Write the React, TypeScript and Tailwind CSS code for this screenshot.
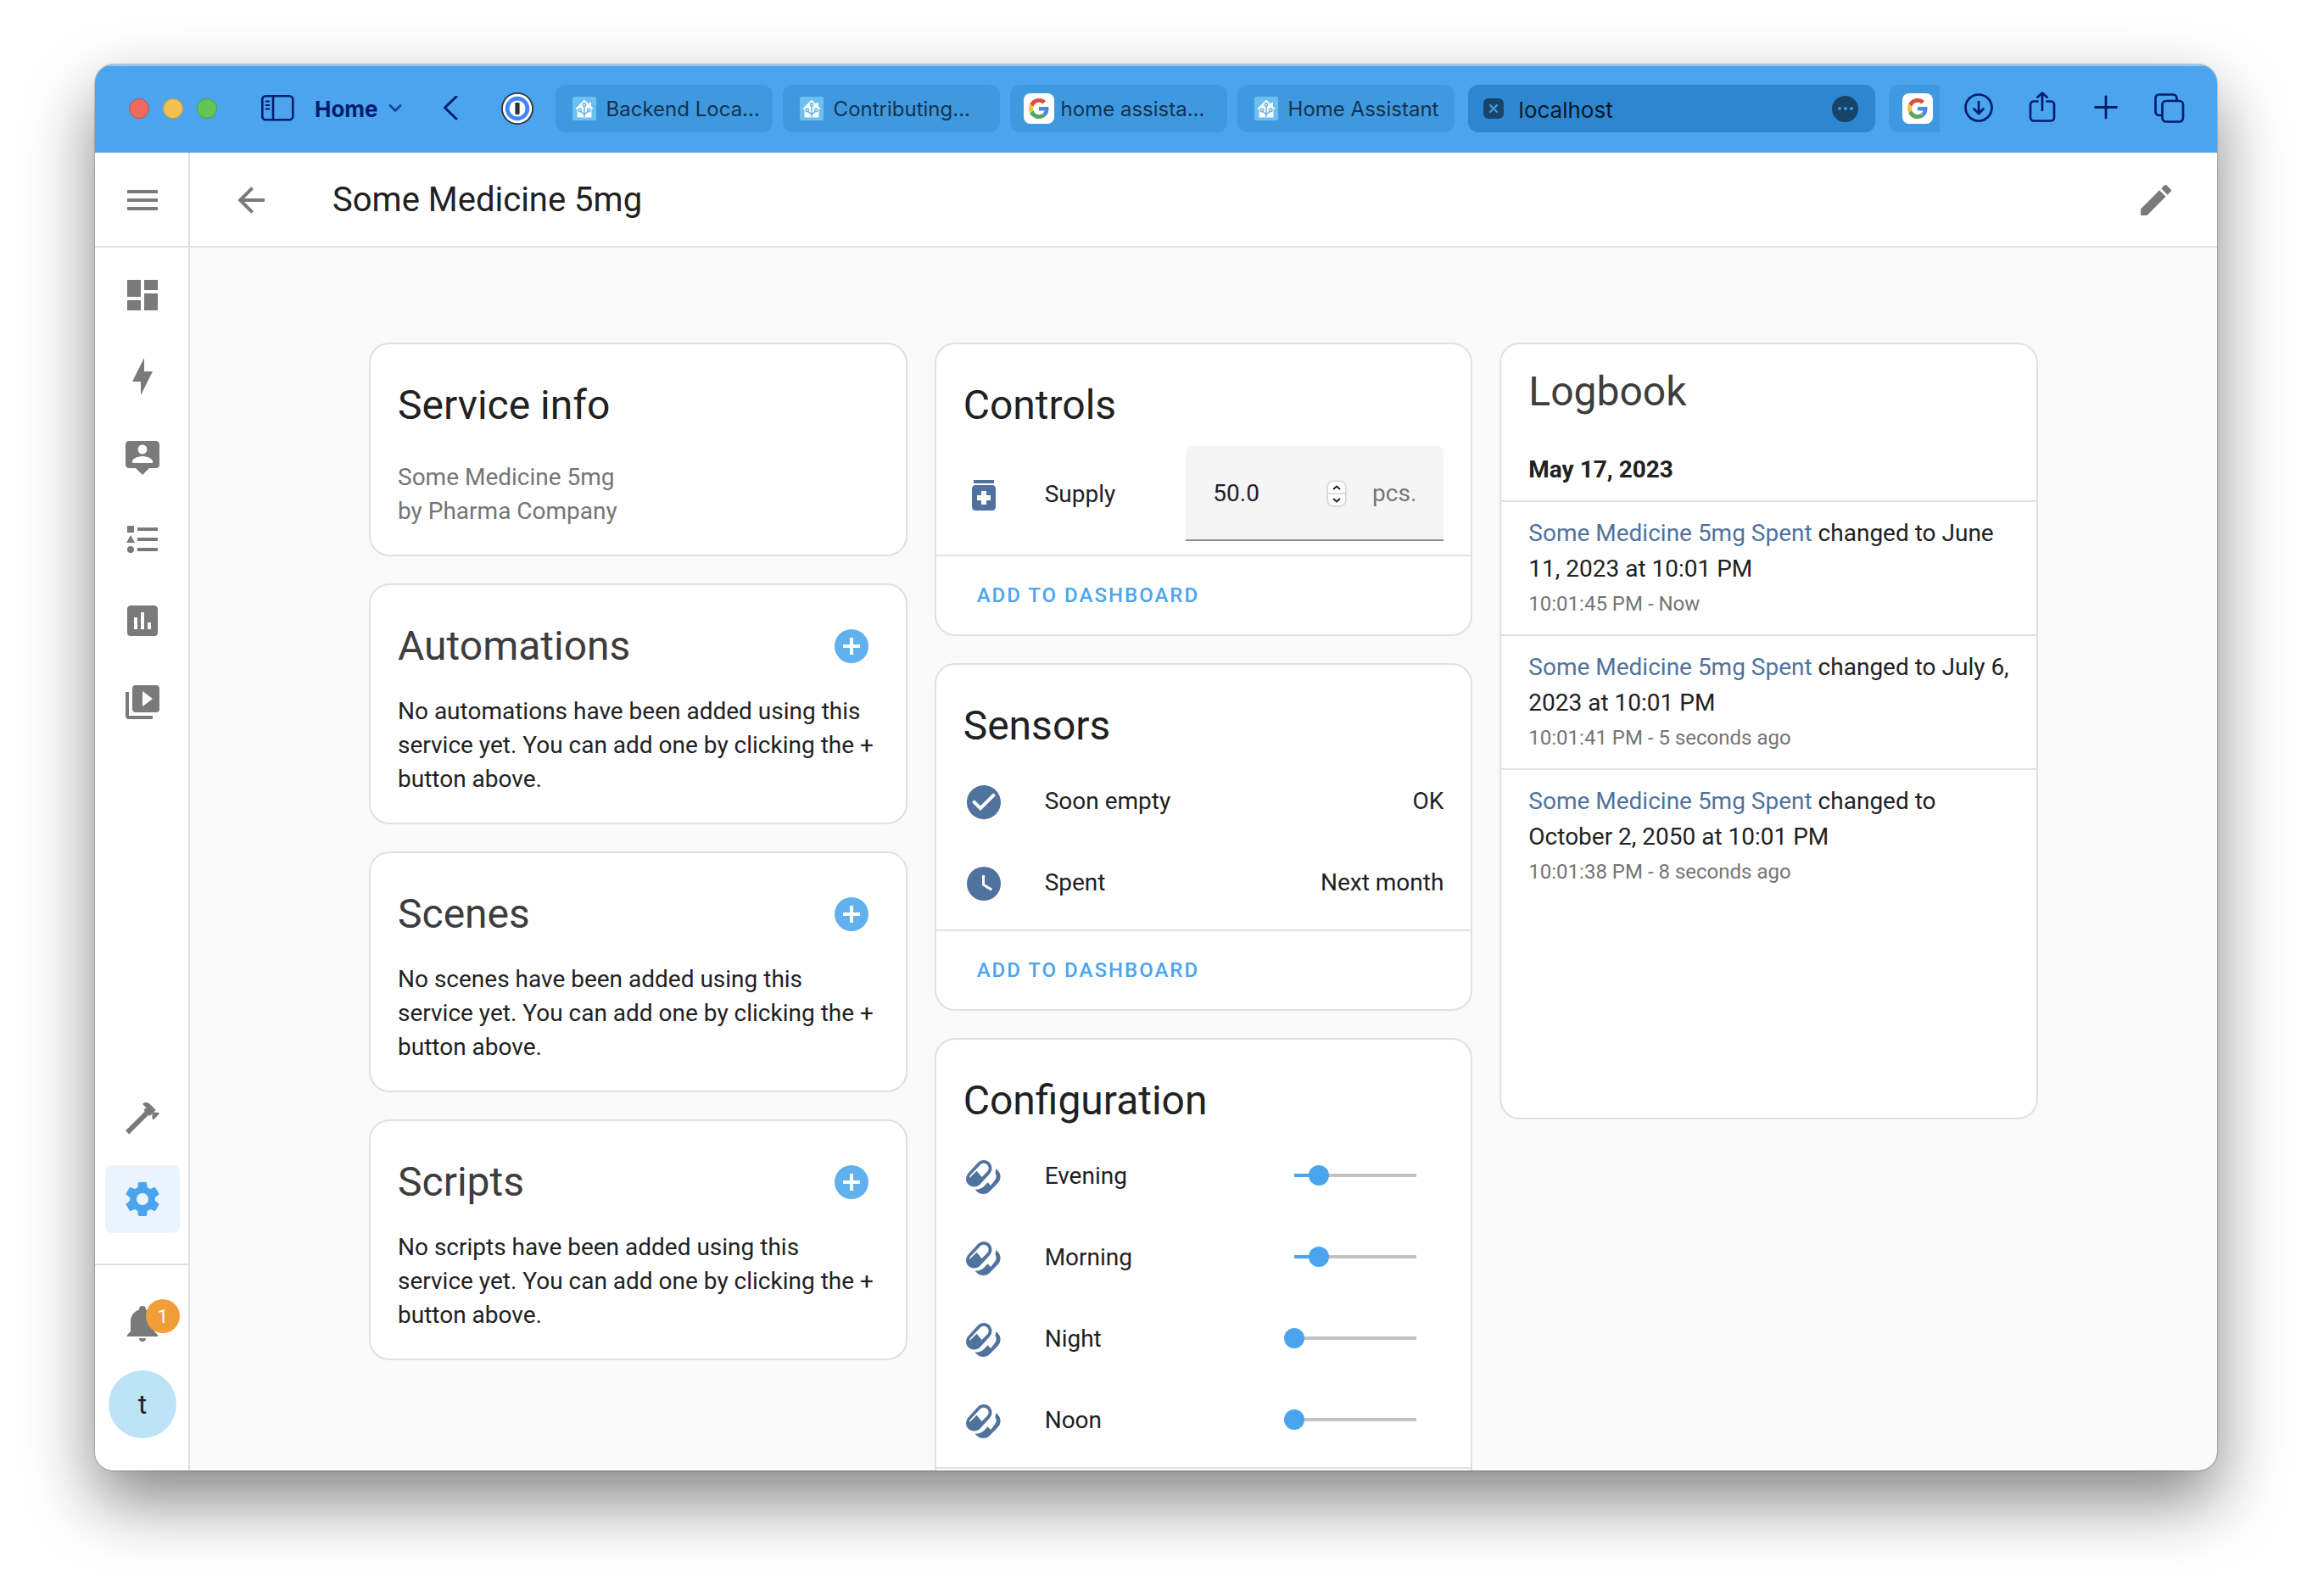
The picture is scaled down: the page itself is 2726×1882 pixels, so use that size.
import React from "react";

const MENU = "M3,6H21V8H3V6M3,11H21V13H3V11M3,16H21V18H3V16Z";
const ARROW_LEFT =
  "M20,11V13H8L13.5,18.5L12.08,19.92L4.16,12L12.08,4.08L13.5,5.5L8,11H20Z";
const PENCIL =
  "M20.71,7.04C21.1,6.65 21.1,6 20.71,5.63L18.37,3.29C18,2.9 17.35,2.9 16.96,3.29L15.12,5.12L18.87,8.87M3,17.25V21H6.75L17.81,9.93L14.06,6.18L3,17.25Z";
const DASHBOARD = "M13,3V9H21V3M13,21H21V11H13M3,21H11V15H3M3,13H11V3H3V13Z";
const LIGHTNING = "M11 15H6L13 1V9H18L11 23V15Z";
const TOOLTIP_ACCOUNT =
  "M20 2H4C2.89 2 2 2.89 2 4V16C2 17.11 2.9 18 4 18H8L12 22L16 18H20C21.11 18 22 17.11 22 16V4C22 2.89 21.11 2 20 2M12 4.3C13.5 4.3 14.7 5.5 14.7 7S13.5 9.7 12 9.7 9.3 8.5 9.3 7 10.5 4.3 12 4.3M18 15H6V14.1C6 12.1 10 11 12 11S18 12.1 18 14.1V15Z";
const LIST_TYPE =
  "M5,9.5L7.5,14H2.5L5,9.5M3,4H7V8H3V4M5,20A2,2 0 0,0 7,18A2,2 0 0,0 5,16A2,2 0 0,0 3,18A2,2 0 0,0 5,20M9,5V7H21V5H9M9,19H21V17H9V19M9,13H21V11H9V13Z";
const CHART_BOX =
  "M9 17H7V10H9V17M13 17H11V7H13V17M17 17H15V13H17V17M19 3H5C3.89 3 3 3.9 3 5V19A2 2 0 0 0 5 21H19A2 2 0 0 0 21 19V5C21 3.9 20.1 3 19 3Z";
const PLAY_BOXES =
  "M4,6H2V20A2,2 0 0,0 4,22H18V20H4V6M20,2H8A2,2 0 0,0 6,4V16A2,2 0 0,0 8,18H20A2,2 0 0,0 22,16V4A2,2 0 0,0 20,2M12,14.5V5.5L18,10L12,14.5Z";
const HAMMER =
  "M2,19.63L13.43,8.2L12.72,7.5L14.14,6.07L12,3.89C13.2,2.7 15.09,2.7 16.27,3.89L19.87,7.5L18.45,8.91H21.29L22,9.62L18.45,13.21L17.74,12.5V9.62L16.27,11.04L15.56,10.33L4.13,21.76L2,19.63Z";
const COG =
  "M12,15.5A3.5,3.5 0 0,1 8.5,12A3.5,3.5 0 0,1 12,8.5A3.5,3.5 0 0,1 15.5,12A3.5,3.5 0 0,1 12,15.5M19.43,12.97C19.47,12.65 19.5,12.33 19.5,12C19.5,11.67 19.47,11.34 19.43,11L21.54,9.37C21.73,9.22 21.78,8.95 21.66,8.73L19.66,5.27C19.54,5.05 19.27,4.96 19.05,5.05L16.56,6.05C16.04,5.66 15.5,5.32 14.87,5.07L14.5,2.42C14.46,2.18 14.25,2 14,2H10C9.75,2 9.54,2.18 9.5,2.42L9.13,5.07C8.5,5.32 7.96,5.66 7.44,6.05L4.95,5.05C4.73,4.96 4.46,5.05 4.34,5.27L2.34,8.73C2.21,8.95 2.27,9.22 2.46,9.37L4.57,11C4.53,11.34 4.5,11.67 4.5,12C4.5,12.33 4.53,12.65 4.57,12.97L2.46,14.63C2.27,14.78 2.21,15.05 2.34,15.27L4.34,18.73C4.46,18.95 4.73,19.03 4.95,18.95L7.44,17.94C7.96,18.34 8.5,18.68 9.13,18.93L9.5,21.58C9.54,21.82 9.75,22 10,22H14C14.25,22 14.46,21.82 14.5,21.58L14.87,18.93C15.5,18.67 16.04,18.34 16.56,17.94L19.05,18.95C19.27,19.03 19.54,18.95 19.66,18.73L21.66,15.27C21.78,15.05 21.73,14.78 21.54,14.63L19.43,12.97Z";
const BELL =
  "M21,19V20H3V19L5,17V11C5,7.9 7.03,5.17 10,4.29C10,4.19 10,4.1 10,4A2,2 0 0,1 12,2A2,2 0 0,1 14,4C14,4.1 14,4.19 14,4.29C16.97,5.17 19,7.9 19,11V17L21,19M14,21A2,2 0 0,1 12,23A2,2 0 0,1 10,21";
const PLUS_CIRCLE =
  "M17,13H13V17H11V13H7V11H11V7H13V11H17M12,2A10,10 0 0,0 2,12A10,10 0 0,0 12,22A10,10 0 0,0 22,12A10,10 0 0,0 12,2Z";
const CHECK_CIRCLE =
  "M12 2C6.5 2 2 6.5 2 12S6.5 22 12 22 22 17.5 22 12 17.5 2 12 2M10 17L5 12L6.41 10.59L10 14.17L17.59 6.58L19 8L10 17Z";
const CLOCK =
  "M12,2A10,10 0 0,0 2,12A10,10 0 0,0 12,22A10,10 0 0,0 22,12A10,10 0 0,0 12,2M16.2,16.2L11,13V7H12.5V12.2L17,14.9L16.2,16.2Z";
const MEDICATION =
  "M6,3H18V5H6V3M17,6H7C5.9,6 5,6.9 5,8V19C5,20.1 5.9,21 7,21H17C18.1,21 19,20.1 19,19V8C19,6.9 18.1,6 17,6M16,15H13.5V17.5H10.5V15H8V12H10.5V9.5H13.5V12H16V15Z";
const PILLS =
  "M8.6 3.4C10.5 1.6 13.5 1.6 15.3 3.4C17.2 5.3 17.2 8.3 15.3 10.2L9.7 16.4C7.8 18.2 4.8 18.2 2.9 16.4C1.1 14.5 1.1 11.5 2.9 9.6ZM10 4.6L4.2 10.7C3.7 11.2 3.5 11.9 3.5 12.6L7.8 8.4L10.8 12L14 8.7C15.1 7.6 15.1 5.8 14 4.7C12.9 3.6 11.1 3.5 10 4.6ZM19 7.1C21.3 8.3 22.6 11.4 21.3 14C20.9 14.9 20.3 15.5 19.6 16.2L15.4 20.5C14 22 11.6 22.4 9.6 21.6C8.3 21.1 7.4 20.2 6.8 19.3C8.6 19.4 10.4 18.9 11.9 17.6L14.3 15.1L16 17L18.2 14.2C19.6 12.7 19.6 11 18.7 9.5C18.9 8.7 19.1 7.9 19 7.1Z";

function Icon({ path }: { path: string }) {
  return (
    <svg viewBox="0 0 24 24" className="size-12 shrink-0" fill="currentColor" aria-hidden="true">
      <path fillRule="evenodd" d={path} />
    </svg>
  );
}

function HomeAssistantLogo() {
  return (
    <svg viewBox="0 0 28 28" className="size-7 shrink-0" aria-hidden="true">
      <rect width="28" height="28" rx="2" fill="#6cc0f0" />
      <path d="M14 3.5L3 14.5H5.5V24.5H22.5V14.5H25L22 11.5V7H19.5V9Z" fill="#f7f9fb" />
      <g fill="none" stroke="#5db4e8" strokeWidth="1.4">
        <path d="M14 24V11M14 21L9.5 17.2M14 21L18.5 17.2" />
        <circle cx="14" cy="9.5" r="1.7" />
        <circle cx="8.8" cy="16" r="1.7" />
        <circle cx="19.2" cy="16" r="1.7" />
      </g>
    </svg>
  );
}

function GoogleLogo() {
  return (
    <span className="flex size-9 shrink-0 items-center justify-center rounded-lg bg-white">
      <svg viewBox="0 0 48 48" className="size-6" aria-hidden="true">
        <path fill="#d94f3d" d="M24 9.5c3.54 0 6.71 1.22 9.21 3.6l6.85-6.85C35.9 2.38 30.47 0 24 0 14.62 0 6.51 5.38 2.56 13.22l7.98 6.19C12.43 13.72 17.74 9.5 24 9.5z" />
        <path fill="#5086ec" d="M46.98 24.55c0-1.57-.15-3.09-.38-4.55H24v9.02h12.94c-.58 2.96-2.26 5.48-4.78 7.18l7.73 6c4.51-4.18 7.09-10.36 7.09-17.65z" />
        <path fill="#f2be42" d="M10.53 28.59c-.48-1.45-.76-2.99-.76-4.59s.27-3.14.76-4.59l-7.98-6.19C.92 16.46 0 20.12 0 24c0 3.88.92 7.54 2.56 10.78l7.97-6.19z" />
        <path fill="#58a55c" d="M24 48c6.48 0 11.93-2.13 15.89-5.81l-7.73-6c-2.15 1.45-4.92 2.3-8.16 2.3-6.26 0-11.57-4.22-13.47-9.91l-7.98 6.19C6.51 42.62 14.62 48 24 48z" />
      </svg>
    </span>
  );
}

function BrowserTab({ title, google = false }: { title: string; google?: boolean }) {
  return (
    <button
      className={`flex h-14 w-64 shrink-0 items-center rounded-xl bg-[#3f99e1] text-2xl text-[#15324c] ${
        google ? "gap-2 pl-4" : "gap-3 pl-5"
      }`}
    >
      {google ? <GoogleLogo /> : <HomeAssistantLogo />}
      <span className="pt-[2px] whitespace-nowrap">{title}</span>
    </button>
  );
}

function BrowserBar() {
  return (
    <div className="flex h-[104px] shrink-0 items-center bg-[#4ba5ee] pl-10 pr-[38px] font-[Inter,sans-serif] text-[#021c6b] shadow-[inset_0_2px_0_#8cc6f5]">
      <div className="flex gap-4">
        <span className="size-6 rounded-full border border-[#c9504a] bg-[#ed6a5e]" />
        <span className="size-6 rounded-full border border-[#cf9a3c] bg-[#f5bf4f]" />
        <span className="size-6 rounded-full border border-[#4ba33b] bg-[#62c554]" />
      </div>
      <button aria-label="Sidebar" className="ml-[51px]">
        <svg viewBox="0 0 40 32" className="h-8 w-10" fill="none" stroke="currentColor" strokeWidth="2.6" strokeLinecap="round">
          <rect x="2.3" y="1.3" width="36" height="28" rx="4" />
          <path d="M15 1.5V29" />
          <path d="M6.5 7.5H10.5M6.5 12H10.5M6.5 16.5H10.5" strokeWidth="1.8" />
        </svg>
      </button>
      <button className="ml-6 flex items-center gap-3 text-[26px] font-bold">
        Home
        <svg viewBox="0 0 16 12" className="h-3 w-4" fill="none" stroke="#114a94" strokeWidth="2.8" strokeLinecap="round" strokeLinejoin="round">
          <path d="M2 2.5L8 8.5L14 2.5" />
        </svg>
      </button>
      <button aria-label="Back" className="ml-12">
        <svg viewBox="0 0 18 30" className="h-[30px] w-[18px]" fill="none" stroke="currentColor" strokeWidth="3" strokeLinecap="round" strokeLinejoin="round">
          <path d="M16 1L2.5 14L16 27" />
        </svg>
      </button>
      <button aria-label="Password manager" className="ml-[51px]">
        <svg viewBox="0 0 38 38" className="size-[38px]">
          <circle cx="19" cy="19" r="19" fill="#2b3238" />
          <circle cx="19" cy="19" r="17.2" fill="#fff" />
          <circle cx="19" cy="19" r="14.2" fill="#3f88f5" />
          <circle cx="19" cy="19" r="9.5" fill="#fff" />
          <rect x="16.4" y="12" width="5.2" height="14" rx="1" fill="#2b3238" />
        </svg>
      </button>
      <div className="ml-[26px] flex min-w-0 flex-1 gap-3">
        <BrowserTab title="Backend Loca..." />
        <BrowserTab title="Contributing..." />
        <BrowserTab title="home assista..." google />
        <BrowserTab title="Home Assistant" />
        <div className="mx-1 flex h-14 min-w-0 flex-1 items-center gap-[18px] rounded-xl bg-[#2c87d0] pl-[18px] pr-5 text-[#0b1722]">
          <button aria-label="Close tab" className="flex size-6 items-center justify-center rounded-md bg-[#174468]">
            <svg viewBox="0 0 12 12" className="size-3" stroke="#3f99e1" strokeWidth="2.4" strokeLinecap="round">
              <path d="M2 2L10 10M10 2L2 10" />
            </svg>
          </button>
          <input aria-label="Address" defaultValue="localhost" className="min-w-0 flex-1 bg-transparent pt-[2px] text-[26px] outline-none" />
          <button aria-label="Page menu" className="flex size-[31px] items-center justify-center gap-[3px] rounded-full bg-[#174468]">
            <span className="size-1 rounded-full bg-[#3f99e1]" />
            <span className="size-1 rounded-full bg-[#3f99e1]" />
            <span className="size-1 rounded-full bg-[#3f99e1]" />
          </button>
        </div>
        <button aria-label="Google" className="flex h-14 w-[60px] shrink-0 items-center rounded-l-xl bg-[#3f99e1] pl-4">
          <GoogleLogo />
        </button>
      </div>
      <div className="ml-7 flex items-center gap-[39px]">
        <button aria-label="Downloads">
          <svg viewBox="0 0 36 36" className="size-9" fill="none" stroke="currentColor" strokeWidth="2.7" strokeLinecap="round" strokeLinejoin="round">
            <circle cx="18" cy="17" r="15.5" />
            <path d="M18 10V24M12.5 18.5L18 24L23.5 18.5" />
          </svg>
        </button>
        <button aria-label="Share">
          <svg viewBox="0 0 36 40" className="h-10 w-9" fill="none" stroke="currentColor" strokeWidth="2.7" strokeLinecap="round" strokeLinejoin="round">
            <path d="M18 22V1.5M12.5 6.5L18 1.5L23.5 6.5M12.5 11.5H8A4 4 0 0 0 4 15.5V30.5A4 4 0 0 0 8 34.5H28A4 4 0 0 0 32 30.5V15.5A4 4 0 0 0 28 11.5H23.5" />
          </svg>
        </button>
        <button aria-label="New tab">
          <svg viewBox="0 0 36 36" className="size-9" stroke="currentColor" strokeWidth="2.8" strokeLinecap="round">
            <path d="M18 4V29M5.5 16.5H30.5" />
          </svg>
        </button>
        <button aria-label="Tab overview">
          <svg viewBox="0 0 36 36" className="size-9" fill="none" stroke="currentColor" strokeWidth="2.7" strokeLinejoin="round">
            <rect x="9.5" y="9" width="24.5" height="24.5" rx="4.5" />
            <path d="M9.5 26H6A4.5 4.5 0 0 1 1.5 21.5V5.5A4 4 0 0 1 5.5 1.5H22A4.5 4.5 0 0 1 26.5 6V9" />
          </svg>
        </button>
      </div>
    </div>
  );
}

function NavItem({ path, label, active = false }: { path: string; label: string; active?: boolean }) {
  return (
    <a
      href="#"
      aria-label={label}
      className={`flex h-20 items-center justify-center rounded-lg ${
        active ? "bg-[#e9f4fd] text-[#4ba5ee]" : "text-[#7a7a7a]"
      }`}
    >
      <Icon path={path} />
    </a>
  );
}

function Sidebar() {
  return (
    <aside className="flex w-28 shrink-0 flex-col border-r-2 border-[#e0e0e0] bg-white">
      <div className="flex h-28 shrink-0 items-center justify-center border-b-2 border-[#e0e0e0] pt-[2px] pl-[2px]">
        <button aria-label="Menu" className="text-[#7a7a7a]">
          <Icon path={MENU} />
        </button>
      </div>
      <nav className="flex flex-1 flex-col gap-4 px-3 pt-4 pb-9 pr-[10px]">
        <NavItem path={DASHBOARD} label="Overview" />
        <NavItem path={LIGHTNING} label="Energy" />
        <NavItem path={TOOLTIP_ACCOUNT} label="Map" />
        <NavItem path={LIST_TYPE} label="Logbook" />
        <NavItem path={CHART_BOX} label="History" />
        <NavItem path={PLAY_BOXES} label="Media" />
        <div className="flex-1" />
        <NavItem path={HAMMER} label="Developer tools" />
        <NavItem path={COG} label="Settings" active />
      </nav>
      <div className="flex flex-col items-center gap-4 border-t-2 border-[#e0e0e0] pt-7 pb-[38px] pl-[2px]">
        <button aria-label="Notifications" className="relative flex h-20 w-[88px] items-center justify-center text-[#7a7a7a]">
          <Icon path={BELL} />
          <span className="absolute top-3 right-0 flex size-10 items-center justify-center rounded-full bg-[#f19d38] text-[22px] text-white">
            1
          </span>
        </button>
        <button aria-label="Profile" className="flex size-20 items-center justify-center rounded-full bg-[#bde3f9] text-[32px] text-[#212121]">
          t
        </button>
      </div>
    </aside>
  );
}

function Card({ children }: { children: React.ReactNode }) {
  return (
    <section className="overflow-hidden rounded-3xl border-2 border-[#e0e0e0] bg-white">{children}</section>
  );
}

function CardTitle({ children }: { children: React.ReactNode }) {
  return <h2 className="px-8 pt-6 text-5xl leading-[96px]">{children}</h2>;
}

function RelatedCard({ title, noun }: { title: string; noun: string }) {
  return (
    <Card>
      <div className="flex items-center justify-between pt-6 pr-8 pl-8 text-[#3d3d3d]">
        <h2 className="text-5xl leading-[96px]">{title}</h2>
        <button aria-label={`Add ${noun}`} className="flex size-16 items-center justify-center text-[#62b1ef]">
          <Icon path={PLUS_CIRCLE} />
        </button>
      </div>
      <p className="px-8 pt-[9px] pb-[31px] leading-10">
        {`No ${noun} have been added using this service yet. You can add one by clicking the + button above.`}
      </p>
    </Card>
  );
}

function Row({ path, label, htmlFor, children }: { path: string; label: string; htmlFor?: string; children: React.ReactNode }) {
  const Label = htmlFor ? "label" : "span";
  return (
    <div className="flex min-h-20 items-center">
      <span className="pt-1 pr-12 text-[#4f739c]">
        <Icon path={path} />
      </span>
      <Label htmlFor={htmlFor} className="flex-1 pt-[2px]">
        {label}
      </Label>
      {children}
    </div>
  );
}

function CardFooter({ children }: { children?: React.ReactNode }) {
  return <div className="flex h-[94px] items-center border-t-2 border-[#e0e0e0] px-8">{children}</div>;
}

function AddToDashboard() {
  return <button className="px-4 text-2xl font-medium tracking-[2px] text-[#4ba5ee]">ADD TO DASHBOARD</button>;
}

function Slider({ id, value, max }: { id: string; value: number; max: number }) {
  const [current, setCurrent] = React.useState(value);
  const style = { "--fill": `${(current / max) * 100}%` } as React.CSSProperties;
  return (
    <input
      id={id}
      type="range"
      min={0}
      max={max}
      value={current}
      onChange={(event) => setCurrent(Number(event.target.value))}
      style={style}
      className="mr-5 h-6 w-[168px] appearance-none bg-[linear-gradient(to_right,#4ba5ee_var(--fill),#c2c2c2_var(--fill))] bg-[length:144px_4px] bg-center bg-no-repeat [&::-webkit-slider-thumb]:size-6 [&::-webkit-slider-thumb]:appearance-none [&::-webkit-slider-thumb]:rounded-full [&::-webkit-slider-thumb]:bg-[#4ba5ee]"
    />
  );
}

function SupplyField() {
  const input = React.useRef<HTMLInputElement>(null);
  return (
    <div className="flex h-28 w-[304px] items-center rounded-t-lg border-b-2 border-[#8e8e8e] bg-[#f5f5f5] px-8 pt-[2px]">
      <input
        ref={input}
        id="supply"
        type="number"
        step="0.1"
        defaultValue="50.0"
        className="min-w-0 flex-1 [appearance:textfield] bg-transparent outline-none [&::-webkit-inner-spin-button]:appearance-none"
      />
      <div className="mr-8 flex h-7 w-5 flex-col rounded-md bg-white shadow-[0_0_3px_rgba(0,0,0,0.4)]">
        <button aria-label="Increase" onClick={() => input.current?.stepUp()} className="flex flex-1 items-center justify-center border-b-2 border-[#e0e0e0]">
          <svg viewBox="0 0 10 6" className="h-[6px] w-[10px]" fill="none" stroke="#212121" strokeWidth="2">
            <path d="M1 5L5 1.5L9 5" />
          </svg>
        </button>
        <button aria-label="Decrease" onClick={() => input.current?.stepDown()} className="flex flex-1 items-center justify-center">
          <svg viewBox="0 0 10 6" className="h-[6px] w-[10px]" fill="none" stroke="#212121" strokeWidth="2">
            <path d="M1 1L5 4.5L9 1" />
          </svg>
        </button>
      </div>
      <span className="text-[#757575]">pcs.</span>
    </div>
  );
}

const LOG = [
  { state: "June 11, 2023 at 10:01 PM", when: "10:01:45 PM - Now" },
  { state: "July 6, 2023 at 10:01 PM", when: "10:01:41 PM - 5 seconds ago" },
  { state: "October 2, 2050 at 10:01 PM", when: "10:01:38 PM - 8 seconds ago" },
];

const DOSES = [
  { name: "Evening", value: 1 },
  { name: "Morning", value: 1 },
  { name: "Night", value: 0 },
  { name: "Noon", value: 0 },
];

export default function App() {
  return (
    <div className="h-screen overflow-hidden bg-white px-28 pt-[76px] pb-[148px] font-[Roboto,sans-serif] text-[28px] text-[#212121]">
      <div className="flex h-full flex-col overflow-hidden rounded-[22px] bg-[#fafafa] shadow-[0_0_2px_rgba(0,0,0,0.6),0_36px_80px_rgba(0,0,0,0.48)]">
        <BrowserBar />
        <div className="flex min-h-0 flex-1">
          <Sidebar />
          <div className="flex min-w-0 flex-1 flex-col">
            <header className="flex h-28 shrink-0 items-center border-b-2 border-[#e0e0e0] bg-white px-12 pt-[2px] text-[#7a7a7a]">
              <button aria-label="Back">
                <Icon path={ARROW_LEFT} />
              </button>
              <h1 className="ml-[72px] flex-1 text-[40px] text-[#212121]">Some Medicine 5mg</h1>
              <button aria-label="Edit">
                <Icon path={PENCIL} />
              </button>
            </header>
            <main className="min-h-0 flex-1 overflow-hidden pt-28">
              <div className="mx-auto grid max-w-[2000px] grid-cols-3 items-start gap-8 px-4">
                <div className="flex flex-col gap-8">
                  <Card>
                    <CardTitle>Service info</CardTitle>
                    <div className="px-8 pt-[17px] pb-[31px] leading-10 text-[#757575]">
                      <div>Some Medicine 5mg</div>
                      <div>by Pharma Company</div>
                    </div>
                  </Card>
                  <RelatedCard title="Automations" noun="automations" />
                  <RelatedCard title="Scenes" noun="scenes" />
                  <RelatedCard title="Scripts" noun="scripts" />
                </div>
                <div className="flex flex-col gap-8">
                  <Card>
                    <CardTitle>Controls</CardTitle>
                    <div className="px-8 pb-4">
                      <Row path={MEDICATION} label="Supply" htmlFor="supply">
                        <SupplyField />
                      </Row>
                    </div>
                    <CardFooter>
                      <AddToDashboard />
                    </CardFooter>
                  </Card>
                  <Card>
                    <CardTitle>Sensors</CardTitle>
                    <div className="flex flex-col gap-4 px-8 pb-4">
                      <Row path={CHECK_CIRCLE} label="Soon empty">
                        <span className="pt-[2px]">OK</span>
                      </Row>
                      <Row path={CLOCK} label="Spent">
                        <span className="pt-[2px]">Next month</span>
                      </Row>
                    </div>
                    <CardFooter>
                      <AddToDashboard />
                    </CardFooter>
                  </Card>
                  <Card>
                    <CardTitle>Configuration</CardTitle>
                    <div className="flex flex-col gap-4 px-8 pb-4">
                      {DOSES.map((dose) => (
                        <Row key={dose.name} path={PILLS} label={dose.name} htmlFor={dose.name}>
                          <Slider id={dose.name} value={dose.value} max={5} />
                        </Row>
                      ))}
                    </div>
                    <CardFooter />
                  </Card>
                </div>
                <Card>
                  <h2 className="px-8 py-2 text-5xl leading-[96px] text-[#3d3d3d]">Logbook</h2>
                  <div className="h-[800px]">
                    <h3 className="px-8 leading-[72px] font-bold">May 17, 2023</h3>
                    {LOG.map((entry) => (
                      <div key={entry.when} className="border-t-2 border-[#e0e0e0] px-8 py-4">
                        <p className="leading-[42px]">
                          <a href="#" className="text-[#4f739c]">
                            Some Medicine 5mg Spent
                          </a>
                          {` changed to ${entry.state}`}
                        </p>
                        <p className="text-2xl leading-10 text-[#757575]">{entry.when}</p>
                      </div>
                    ))}
                  </div>
                </Card>
              </div>
            </main>
          </div>
        </div>
      </div>
    </div>
  );
}
